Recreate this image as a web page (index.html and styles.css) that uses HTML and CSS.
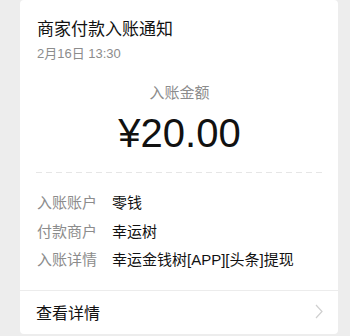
FILE: index.html
```html
<!DOCTYPE html>
<html lang="zh-CN">
<head>
<meta charset="utf-8">
<link rel="stylesheet" href="styles.css">
</head>
<body>
<div class="card">
  <div class="main">
    <div class="title">商家付款入账通知</div>
    <div class="date">2月16日 13:30</div>
    <div class="amount-label">入账金额</div>
    <div class="amount">¥20.00</div>
    <div class="dash"></div>
    <div class="rows">
      <div class="row"><span class="label">入账账户</span><span class="value">零钱</span></div>
      <div class="row"><span class="label">付款商户</span><span class="value">幸运树</span></div>
      <div class="row"><span class="label">入账详情</span><span class="value">幸运金钱树[APP][头条]提现</span></div>
    </div>
  </div>
  <div class="footer">
    <span class="more">查看详情</span>
    <svg class="chev" width="8" height="15" viewBox="0 0 8 15"><path d="M1 1 L7 7.5 L1 14" fill="none" stroke="#cfcfcf" stroke-width="1.2"/></svg>
  </div>
</div>
</body>
</html>
```

FILE: styles.css
```css
html, body {
  margin: 0;
  padding: 0;
  background: #ededed;
  font-family: "Liberation Sans", "Noto Sans CJK SC", sans-serif;
  color: #111;
}
.card {
  margin-left: 20px;
  width: 318px;
  height: 334px;
  background: #fff;
  border-radius: 4px;
  display: flex;
  flex-direction: column;
}
.main {
  padding: 18px 16px 15px 17px;
  border-bottom: 1px solid #ececec;
}
.title {
  font-size: 17px;
  line-height: 24px;
  color: #111;
}
.date {
  margin-top: 4px;
  font-size: 13px;
  line-height: 16px;
  color: #8c8c8c;
}
.amount-label {
  margin-top: 21px;
  text-align: center;
  font-size: 15px;
  line-height: 20px;
  color: #8c8c8c;
}
.amount {
  margin-top: 6px;
  text-align: center;
  font-size: 40px;
  line-height: 48px;
  color: #111;
}
.dash {
  margin-top: 15px;
  margin-left: -1px;
  height: 1px;
  background: repeating-linear-gradient(to right, #e6e6e6 0 6px, transparent 6px 10px);
}
.rows {
  margin-top: 16px;
}
.row {
  display: flex;
  font-size: 15px;
  line-height: 28.7px;
}
.label {
  width: 75px;
  flex: none;
  color: #8c8c8c;
}
.value {
  color: #111;
}
.footer {
  flex: 1;
  display: flex;
  align-items: center;
  justify-content: space-between;
  padding: 0 15px 2px 16px;
}
.more {
  font-size: 16px;
  color: #111;
}
.chev {
  display: block;
}
```
